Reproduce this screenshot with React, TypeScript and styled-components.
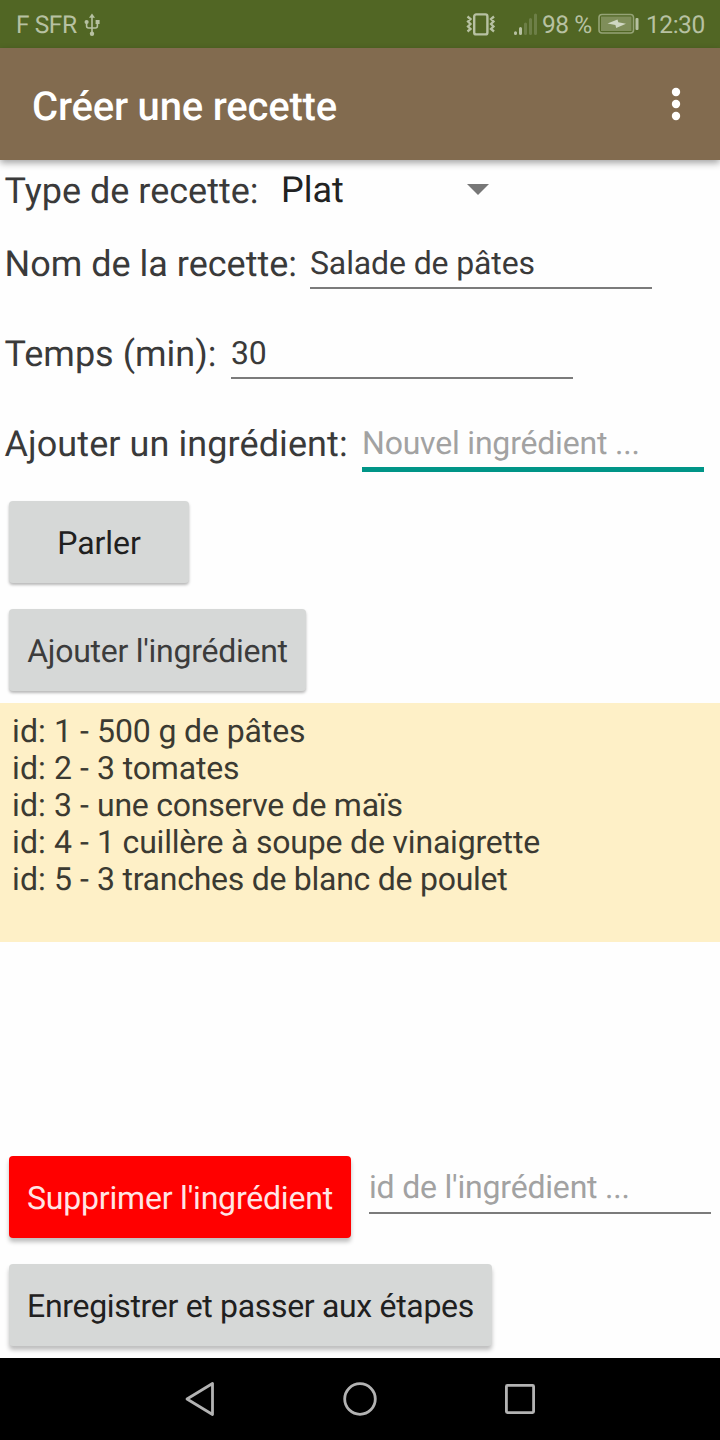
import React from "react";
import styled, { createGlobalStyle } from "styled-components";

const GlobalStyle = createGlobalStyle`
  * { box-sizing: border-box; }
  body { margin: 0; background: #fff; }
`;

const Screen = styled.div`
  width: 720px;
  height: 1440px;
  display: flex;
  flex-direction: column;
  background: #fefefe;
  font-family: Roboto, "Liberation Sans", sans-serif;
  color: #3a3a3a;
  white-space: pre;
  overflow: hidden;
  text-rendering: geometricPrecision;
`;

const StatusBar = styled.header`
  height: 48px;
  flex: none;
  display: flex;
  align-items: center;
  padding: 2px 15px 0 16px;
  background: #516624;
  color: #b7c1a2;
  font-size: 24.5px;
  line-height: 30px;
`;

const StatusText = styled.span<{ $width: number; $left?: number }>`
  width: ${(p) => p.$width}px;
  margin-left: ${(p) => p.$left ?? 0}px;
  flex: none;
  letter-spacing: -0.45px;
`;

const StatusIcon = styled.svg<{ $left?: number }>`
  display: block;
  flex: none;
  margin-top: -2px;
  margin-left: ${(p) => p.$left ?? 0}px;
`;

const StatusSpacer = styled.div`
  flex: 1;
`;

const AppBar = styled.div`
  position: relative;
  height: 112px;
  flex: none;
  display: flex;
  align-items: center;
  justify-content: space-between;
  padding: 4px 38px 0 32px;
  background: #826b4f;
  box-shadow: 0 3px 7px rgba(0, 0, 0, 0.36);
`;

const Title = styled.h1`
  margin: 2px 0 0;
  color: #fff;
  font-size: 40px;
  line-height: 48px;
  font-weight: 500;
  letter-spacing: -0.2px;
`;

const MenuIcon = styled.svg`
  display: block;
  margin-top: -4px;
`;

const Form = styled.main`
  flex: 1;
  min-height: 0;
  display: flex;
  flex-direction: column;
  align-items: flex-start;
`;

const FieldRow = styled.div<{ $height: number; $top: number }>`
  display: flex;
  align-items: flex-start;
  height: ${(p) => p.$height}px;
  padding: ${(p) => p.$top}px 0 0 4.5px;
`;

const Label = styled.label<{ $width: number; $spacing?: number }>`
  width: ${(p) => p.$width}px;
  flex: none;
  font-size: 36px;
  line-height: 42px;
  letter-spacing: ${(p) => p.$spacing ?? 0}px;
`;

const Spinner = styled.div`
  display: flex;
  width: 208px;
  justify-content: space-between;
  font-size: 36px;
  line-height: 42px;
  margin-top: -1px;
  color: #222;
`;

const SpinnerArrow = styled.svg`
  display: block;
  margin-top: 14.5px;
`;

const Field = styled.div<{ $hint?: boolean; $focused?: boolean; $textTop?: number }>`
  width: 342px;
  height: ${(p) => (p.$focused ? 49 : 46)}px;
  padding-top: ${(p) => p.$textTop ?? 1}px;
  font-size: 32px;
  line-height: 38px;
  letter-spacing: ${(p) => (p.$hint ? -0.2 : -0.13)}px;
  color: ${(p) => (p.$hint ? "#a2a2a2" : "#3a3a3a")};
  border-bottom: ${(p) => (p.$focused ? "5px solid #009587" : "2px solid #7b7b7b")};
`;

const Button = styled.button<{
  $width: number;
  $spacing: number;
  $tone?: "muted" | "danger";
  $raised?: boolean;
}>`
  display: block;
  flex: none;
  width: ${(p) => p.$width}px;
  height: 82px;
  margin: 0 0 26px 9px;
  padding: 1px 0 0;
  border: 0;
  border-radius: 4px;
  font: 400 32px/38px Roboto, "Liberation Sans", sans-serif;
  letter-spacing: ${(p) => p.$spacing}px;
  text-rendering: inherit;
  text-align: center;
  white-space: pre;
  color: ${(p) => (p.$tone === "danger" ? "#ffe5e5" : p.$tone === "muted" ? "#3c3c3c" : "#1f2020")};
  background: ${(p) => (p.$tone === "danger" ? "#ff0000" : "#d6d8d7")};
  box-shadow: ${(p) =>
    p.$raised ? "0 4px 4px rgba(0,0,0,.25)" : "0 2px 3px rgba(0,0,0,.28)"};
`;

const Actions = styled.div`
  height: 213px;
  padding-top: 11px;
  flex: none;
`;

const IngredientList = styled.ul`
  width: 720px;
  height: 239px;
  flex: none;
  margin: 0;
  padding: 10px 12px 0;
  list-style: none;
  background: #fef0c7;
  color: #3b3a32;
  font-size: 32px;
  line-height: 37.2px;
`;

const Ingredient = styled.li<{ $spacing: number }>`
  height: 37px;
  letter-spacing: ${(p) => p.$spacing}px;
`;

const IngredientId = styled.span`
  letter-spacing: 0.1px;
`;

const Footer = styled.div`
  margin-top: auto;
  height: 202px;
`;

const DeleteRow = styled.div`
  display: flex;
  gap: 18px;
  height: 108px;
`;

const DeleteField = styled.div`
  padding-top: 12px;
`;

const NavBar = styled.nav`
  height: 82px;
  flex: none;
  display: flex;
  justify-content: center;
  align-items: center;
  gap: 120px;
  background: #000;
`;

const NavIcon = styled.svg`
  display: block;
  fill: none;
  stroke: #b3b3b3;
  stroke-width: 2.8;
  stroke-linejoin: round;
`;

const ingredients = [
  { text: "500 g de pâtes", spacing: -0.12 },
  { text: "3 tomates", spacing: -0.15 },
  { text: "une conserve de maïs", spacing: -0.24 },
  { text: "1 cuillère à soupe de vinaigrette", spacing: -0.19 },
  { text: "3 tranches de blanc de poulet", spacing: -0.26 },
];

export default function App() {
  return (
    <>
      <GlobalStyle />
      <Screen>
        <StatusBar>
          <StatusText $width={68}>F SFR</StatusText>
          <StatusIcon width="16" height="24" viewBox="0 0 16 24" fill="#b7c1a2">
            <path d="M8 1.5l3 4.2H5z" />
            <circle cx="8" cy="21.7" r="2.2" />
            <circle cx="2.6" cy="10" r="2.1" />
            <path d="M11.6 8h4v4h-4z" />
            <path d="M8 5v16M2.6 10v4q0 2 2 2h6.800q2 0 2-2v-4" fill="none" stroke="#b7c1a2" strokeWidth="1.6" />
          </StatusIcon>
          <StatusSpacer />
          <StatusIcon width="30" height="24" viewBox="0 0 30 24" fill="none" stroke="#b7c1a2">
            <rect x="8.2" y="2.4" width="13.2" height="20" rx="2" strokeWidth="2.4" />
            <path d="M1.500 4.500l3 2.500-2.500 2.500 2.500 2.500L2 14.500 4.500 17l-3 2.500M28 4.500l-3 2.500 2.500 2.500-2.500 2.500 2.500 2.500-2.500 2.500 3 2.500" strokeWidth="2.3" />
          </StatusIcon>
          <StatusIcon $left={18} width="24" height="24" viewBox="0 0 24 24">
            <g stroke="#b7c1a2" strokeWidth="3" strokeLinecap="round">
              <path d="M1.500 20.800v.800M6.500 16.500v5" />
              <path d="M11.500 12v9.500M16.500 7.500v14M21.500 3v18.500" opacity=".28" />
            </g>
          </StatusIcon>
          <StatusText $left={4} $width={56}>98 %</StatusText>
          <StatusIcon width="42" height="22" viewBox="0 0 42 22">
            <rect x="1" y="1.5" width="34.5" height="18.5" rx="3" fill="none" stroke="#95a376" strokeWidth="1.6" />
            <rect x="3" y="3.5" width="30.5" height="14.5" fill="#7f8e5a" />
            <rect x="37.5" y="5" width="3" height="12" rx="1" fill="#b7c1a2" />
            <path d="M9.500 10.500L19.500 6.500l.8 2.800 7.700 1.400-9.800 4.300-.8-2.900z" fill="#d0d7c3" />
          </StatusIcon>
          <StatusText $left={6} $width={59}>12:30</StatusText>
        </StatusBar>
        <AppBar>
          <Title>Créer une recette</Title>
          <MenuIcon width="12" height="34" viewBox="0 0 12 34" fill="#fff">
            <circle cx="6" cy="5" r="4.2" />
            <circle cx="6" cy="17" r="4.2" />
            <circle cx="6" cy="29" r="4.2" />
          </MenuIcon>
        </AppBar>
        <Form>
          <FieldRow $height={60} $top={10}>
            <Label $width={276.5}>Type de recette:</Label>
            <Spinner>
              Plat
              <SpinnerArrow width="22" height="11" viewBox="0 0 22 11" fill="#777">
                <path d="M0 0h22L11 11z" />
              </SpinnerArrow>
            </Spinner>
          </FieldRow>
          <FieldRow $height={90} $top={23}>
            <Label $width={305.5}>Nom de la recette:</Label>
            <Field>Salade de pâtes</Field>
          </FieldRow>
          <FieldRow $height={90} $top={23}>
            <Label $width={226.5}>Temps (min):</Label>
            <Field>30</Field>
          </FieldRow>
          <FieldRow $height={90} $top={23}>
            <Label $width={357.5} $spacing={0.08}>Ajouter un ingrédient:</Label>
            <Field $hint $focused>Nouvel ingrédient ...</Field>
          </FieldRow>
          <Actions>
            <Button $width={180} $spacing={-0.1}>Parler</Button>
            <Button $width={297} $spacing={-0.26} $tone="muted">Ajouter l'ingrédient</Button>
          </Actions>
          <IngredientList>
            {ingredients.map((item, i) => (
              <Ingredient key={item.text} $spacing={item.spacing}>
                <IngredientId>{`id: ${i + 1} - `}</IngredientId>
                {item.text}
              </Ingredient>
            ))}
          </IngredientList>
          <Footer>
            <DeleteRow>
              <Button $width={342} $spacing={-0.2} $tone="danger" $raised>Supprimer l'ingrédient</Button>
              <DeleteField>
                <Field $hint $textTop={0}>id de l'ingrédient ...</Field>
              </DeleteField>
            </DeleteRow>
            <Button $width={483} $spacing={-0.32} $raised>Enregistrer et passer aux étapes</Button>
          </Footer>
        </Form>
        <NavBar>
          <NavIcon width="40" height="40" viewBox="0 0 40 40">
            <path d="M7 20L32.500 4.500v31z" />
          </NavIcon>
          <NavIcon width="40" height="40" viewBox="0 0 40 40">
            <circle cx="20" cy="20" r="15.3" />
          </NavIcon>
          <NavIcon width="40" height="40" viewBox="0 0 40 40">
            <rect x="6.4" y="6.4" width="27.2" height="27.2" rx="1" />
          </NavIcon>
        </NavBar>
      </Screen>
    </>
  );
}
